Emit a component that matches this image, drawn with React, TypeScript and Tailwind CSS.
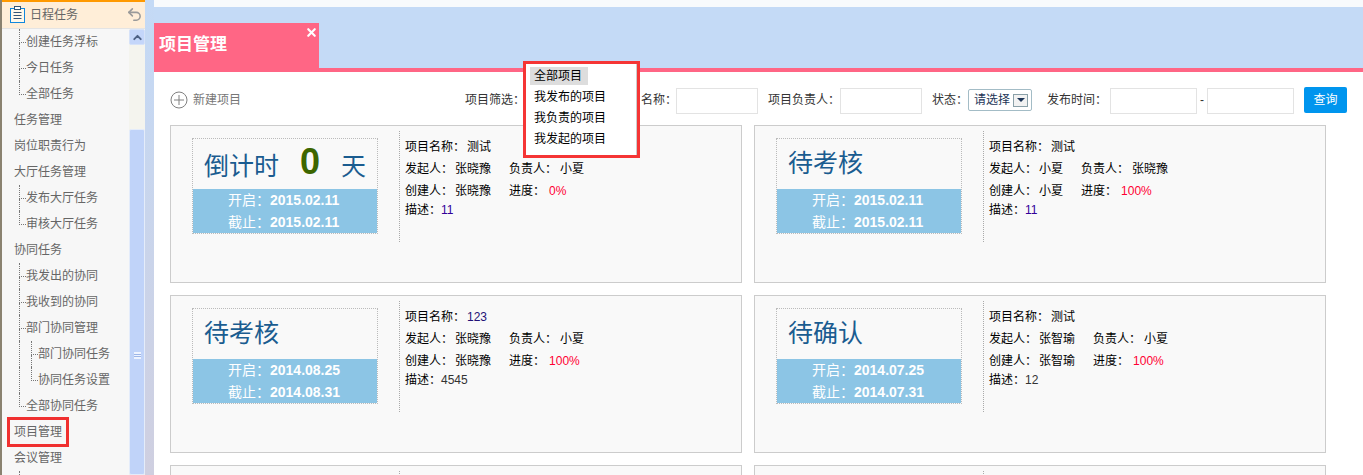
import React from 'react';
import { ChevronUp, Undo2, X } from 'lucide-react';

const menu = [
  { label: '创建任务浮标', depth: 1 },
  { label: '今日任务', depth: 1 },
  { label: '全部任务', depth: 1, last: true },
  { label: '任务管理', depth: 0 },
  { label: '岗位职责行为', depth: 0 },
  { label: '大厅任务管理', depth: 0 },
  { label: '发布大厅任务', depth: 1 },
  { label: '审核大厅任务', depth: 1, last: true },
  { label: '协同任务', depth: 0 },
  { label: '我发出的协同', depth: 1 },
  { label: '我收到的协同', depth: 1 },
  { label: '部门协同管理', depth: 1 },
  { label: '部门协同任务', depth: 2 },
  { label: '协同任务设置', depth: 2, last: true },
  { label: '全部协同任务', depth: 1, last: true },
  { label: '项目管理', depth: 0, active: true },
  { label: '会议管理', depth: 0 },
  { label: '', depth: 1 },
];

const projects = [
  { title: '', name: '测试', owner: '张晓豫', lead: '小夏', progress: '0%', start: '2015.02.11', end: '2015.02.11', desc: '11', descColor: 'text-[#330099]' },
  { title: '待考核', name: '测试', owner: '小夏', lead: '张晓豫', progress: '100%', start: '2015.02.11', end: '2015.02.11', desc: '11', descColor: 'text-[#330099]' },
  { title: '待考核', name: '123', nameColor: 'text-[#221177]', owner: '张晓豫', lead: '小夏', progress: '100%', start: '2014.08.25', end: '2014.08.31', desc: '4545', descColor: 'text-[#333333]' },
  { title: '待确认', name: '测试', owner: '张智瑜', lead: '小夏', progress: '100%', start: '2014.07.25', end: '2014.07.31', desc: '12', descColor: 'text-[#333333]' },
];

function Connector({ last }: { last?: boolean }) {
  return (
    <div className="flex h-full w-[7px] shrink-0 flex-col">
      <div className="h-[14px] border-b border-l border-dotted border-[#777777]" />
      <div className={last ? 'flex-1' : 'flex-1 border-l border-dotted border-[#777777]'} />
    </div>
  );
}

function MenuRow({ label, depth, last, active }: { label: string; depth: number; last?: boolean; active?: boolean }) {
  if (depth === 0) {
    return (
      <div className="flex h-[26px] items-center pl-[5px]">
        <span className={active ? 'flex h-[30px] w-[62px] items-center border-[3px] border-[#f03030] pl-[4px]' : 'pl-[7px]'}>{label}</span>
      </div>
    );
  }
  return (
    <div className="flex h-[26px] items-center pl-[17px]">
      {depth === 2 && <div className="h-full w-[12px] shrink-0 border-l border-dotted border-[#777777]" />}
      <Connector last={last} />
      <span>{label}</span>
    </div>
  );
}

function Sidebar() {
  return (
    <div className="flex h-full w-[145px] shrink-0 flex-col border-l-2 border-[#8a8270] bg-[#f7f7f7] text-xs text-[#666666]">
      <div className="h-[2px] shrink-0 bg-[#ff9900]" />
      <div className="flex h-[27px] shrink-0 items-center border-b border-[#e4e4e4] bg-[#ffeed8] pb-[1px] pl-[8px] pr-[2px]">
        <svg width="15" height="17" viewBox="0 0 15 17" fill="none" stroke="#1188dd" className="shrink-0">
          <rect x="0.5" y="2.5" width="14" height="14" fill="#fff8ea" />
          <rect x="4.5" y="0.5" width="6" height="3" fill="#ffffff" stroke="#335577" />
          <path d="M3.5 6.5h8M3.5 9.5h8M3.5 12.5h8" stroke="#335577" />
        </svg>
        <span className="ml-[5px] flex-1">日程任务</span>
        <Undo2 size={17} strokeWidth={2.2} className="text-[#9a9a9a]" />
      </div>
      <div className="flex min-h-0 flex-1">
        <div className="min-w-0 flex-1 overflow-hidden">
          {menu.map((item, i) => (
            <MenuRow key={i} {...item} />
          ))}
        </div>
        <div className="flex w-[16px] shrink-0 flex-col bg-[#f4f4ee]">
          <div className="flex h-[16px] shrink-0 items-center justify-center rounded-[2px] border border-[#d6e2f8] bg-[#c4d6fa] text-[#4d6185]">
            <ChevronUp size={13} strokeWidth={3.5} />
          </div>
          <div className="h-[84px] shrink-0" />
          <div className="flex flex-1 flex-col items-center rounded-[2px] border border-[#e4ecfa] bg-[#c0d3f9] pt-[222px]">
            <div className="h-[7px] w-[7px] border-y border-[#eef3ff] bg-[linear-gradient(#eef3ff_1px,#9db6e8_1px,#9db6e8_2px,#eef3ff_2px,#eef3ff_3px,#9db6e8_3px,#9db6e8_4px,#eef3ff_4px)]" />
          </div>
        </div>
      </div>
    </div>
  );
}

function Field({ className }: { className: string }) {
  return <input readOnly className={`mt-[2px] h-[26px] border border-[#e3e3e3] bg-white ${className}`} />;
}

function FilterBar() {
  return (
    <div className="flex h-[26px] items-center whitespace-nowrap pl-[16px] text-xs text-[#333333]">
      <svg width="18" height="18" viewBox="0 0 18 18" fill="none" stroke="#808080" className="shrink-0">
        <circle cx="9" cy="9" r="8" />
        <path d="M9 4v10M4 9h10" />
      </svg>
      <span className="ml-[5px] w-[272px] text-[#777777]">新建项目</span>
      <span className="w-[152px]">项目筛选：</span>
      <span className="w-[59px]">项目名称：</span>
      <Field className="w-[82px]" />
      <span className="ml-[10px] w-[72px]">项目负责人：</span>
      <Field className="w-[82px]" />
      <span className="ml-[10px] w-[36px]">状态：</span>
      <div className="flex h-[22px] w-[64px] items-center rounded-[2px] border border-[#a3bcc6] pl-[5px] text-[#1d3557]">
        <span>请选择</span>
        <span className="ml-[3px] flex h-[13px] w-[15px] items-center justify-center border border-[#8aa0a8] bg-[#f2f2f2]">
          <span className="border-x-[4px] border-t-[4px] border-x-transparent border-t-[#1d3557]" />
        </span>
      </div>
      <span className="ml-[15px] w-[63px]">发布时间：</span>
      <Field className="w-[87px]" />
      <span className="w-[10px] text-center">-</span>
      <Field className="w-[87px]" />
      <button className="ml-[10px] h-[26px] w-[43px] rounded-[2px] bg-[#0095ee] text-white">查询</button>
    </div>
  );
}

function ProjectCard({ p, index }: { p: (typeof projects)[number]; index: number }) {
  return (
    <div className="flex h-[158px] items-start border border-[#cccccc] bg-[#f9f9f9] pl-[21px] pt-[5px]">
      <div className="mt-[7px] flex h-[96px] w-[186px] shrink-0 flex-col border border-dotted border-[#bbbbbb]">
        <div className={`flex h-[52px] text-[25px] leading-none text-[#1a5c90] ${index === 0 ? 'items-center pt-[4px]' : 'items-start pt-[12px]'}`}>
          {index === 0 ? (
            <>
              <span className="ml-[11px]">倒计时</span>
              <span className="mb-[8px] ml-[21px] text-[36px] font-bold text-[#3d6600]">0</span>
              <span className="ml-[21px]">天</span>
            </>
          ) : (
            <span className="ml-[11px]">{p.title}</span>
          )}
        </div>
        <div className="flex-1 bg-[#8cc5e5] pl-[35px] pt-[1px] text-sm leading-[21.5px] text-white">
          <div>开启：<b>{p.start}</b></div>
          <div>截止：<b>{p.end}</b></div>
        </div>
      </div>
      <div className="ml-[21px] h-[111px] border-l border-dotted border-[#aaaaaa]" />
      <div className="ml-[5px] mt-[5px] text-xs text-black">
        <div className="h-[22px] leading-[22px]">项目名称：<span className={`ml-[2px] ${p.nameColor ?? ''}`}>{p.name}</span></div>
        <div className="flex h-[22px] leading-[22px]">
          <span>发起人：</span>
          <span className="ml-[2px] mr-[18px]">{p.owner}</span>
          <span>负责人：</span>
          <span className="ml-[3px]">{p.lead}</span>
        </div>
        <div className="flex h-[22px] leading-[22px]">
          <span>创建人：</span>
          <span className="ml-[2px] mr-[18px]">{p.owner}</span>
          <span>进度：</span>
          <span className="ml-[4px] text-[#ff0033]">{p.progress}</span>
        </div>
        <div className="h-[16px] leading-[16px]">描述：<span className={p.descColor}>{p.desc}</span></div>
      </div>
    </div>
  );
}

export default function App() {
  return (
    <div className="relative flex h-[475px] w-[1363px] overflow-hidden bg-white font-['Liberation_Sans','Noto_Sans_CJK_SC',sans-serif]">
      <Sidebar />
      <div className="w-[9px] shrink-0 bg-[linear-gradient(#c4daf6,#cfcfe0)]" />
      <div className="flex min-w-0 flex-1 flex-col">
        <div className="h-[7px] shrink-0 bg-[#f8fafc]" />
        <div className="flex h-[65px] shrink-0 items-end border-b-4 border-[#ff6685] bg-[#c4daf6]">
          <div className="relative -mb-[4px] flex h-[49px] w-[165px] items-center bg-[#ff6685] pb-[6px] pl-[5px] text-[17px] font-bold text-white">
            项目管理
            <X size={13} strokeWidth={4} className="absolute right-[1px] top-[3px]" />
          </div>
        </div>
        <div className="shrink-0 pt-[15px]">
          <FilterBar />
        </div>
        <div className="grid w-[1172px] shrink-0 grid-cols-2 gap-x-[12px] gap-y-[12px] pl-[16px] pt-[12px]">
          {projects.map((p, i) => (
            <ProjectCard key={i} p={p} index={i} />
          ))}
          <div className="h-[158px] border border-[#cccccc] bg-[#f9f9f9]">
            <div className="ml-[228px] mt-[5px] h-[111px] border-l border-dotted border-[#aaaaaa]" />
          </div>
          <div className="h-[158px] border border-[#cccccc] bg-[#f9f9f9]">
            <div className="ml-[228px] mt-[5px] h-[111px] border-l border-dotted border-[#aaaaaa]" />
          </div>
        </div>
      </div>
      {/* filter dropdown, highlighted */}
      <div className="absolute left-[523px] top-[61px] h-[97px] w-[117px] border-[3px] border-[#f53535] bg-white text-xs text-black">
        <div className="flex h-full flex-col border-r border-[#cccccc] pl-[4px] pt-[1px]">
          <div className="flex h-[21px] items-center"><span className="bg-[#dddddd] py-[1px] pl-[4px] pr-[6px]">全部项目</span></div>
          <div className="flex h-[21px] items-center pl-[4px]">我发布的项目</div>
          <div className="flex h-[21px] items-center pl-[4px]">我负责的项目</div>
          <div className="flex h-[21px] items-center pl-[4px]">我发起的项目</div>
        </div>
      </div>
    </div>
  );
}
